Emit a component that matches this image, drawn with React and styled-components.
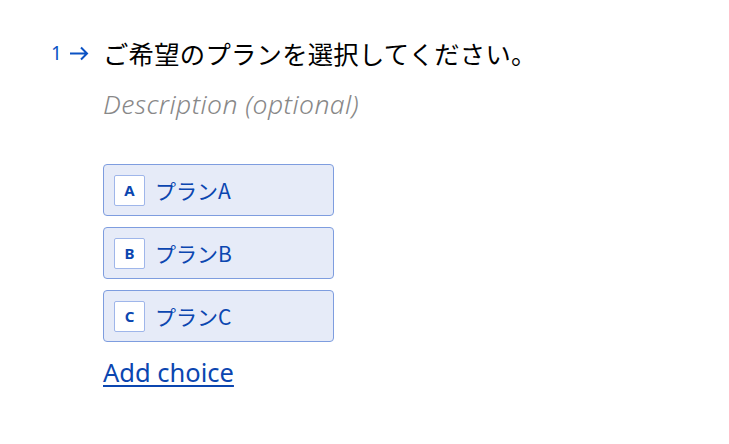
import React from "react";
import styled, { createGlobalStyle } from "styled-components";

const GlobalStyle = createGlobalStyle`
  html, body {
    margin: 0;
    padding: 0;
    background: #ffffff;
  }
  body {
    font-family: "Noto Sans", "Noto Sans CJK JP", sans-serif;
  }
`;

const choices = [
  { key: "A", label: "プランA" },
  { key: "B", label: "プランB" },
  { key: "C", label: "プランC" },
];

const App = () => {
  return (
    <>
      <GlobalStyle />
      <Page>
        <Question>
          <Counter>
            <Num>1</Num>
            <svg width="20" height="15" viewBox="0 0 20 15">
              <path
                d="M1 7.5h17M12 1.5L18 7.5l-6 6"
                fill="none"
                stroke="#0b52c4"
                strokeWidth="2"
              />
            </svg>
          </Counter>
          <Body>
            <Title>ご希望のプランを選択してください。</Title>
            <Description>Description (optional)</Description>
            <ChoiceList>
              {choices.map((c) => (
                <Choice key={c.key}>
                  <KeyBox>{c.key}</KeyBox>
                  <Label>{c.label}</Label>
                </Choice>
              ))}
            </ChoiceList>
            <AddChoice>Add choice</AddChoice>
          </Body>
        </Question>
      </Page>
    </>
  );
};

const Page = styled.div`
  padding: 36px 0 0 49px;
`;

const Question = styled.div`
  display: flex;
  align-items: flex-start;
`;

const Counter = styled.div`
  display: flex;
  align-items: center;
  gap: 7px;
  width: 54px;
  height: 34px;
  color: #0b52c4;
`;

const Num = styled.span`
  font-size: 19px;
  line-height: 1;
  padding-left: 2px;
`;

const Body = styled.div`
  display: flex;
  flex-direction: column;
  align-items: flex-start;
`;

const Title = styled.div`
  font-family: "Noto Sans CJK JP", sans-serif;
  font-size: 25.3px;
  line-height: 34px;
  color: #000;
  letter-spacing: 0.3px;
`;

const Description = styled.div`
  margin-top: 17px;
  font-size: 26.5px;
  line-height: 34px;
  font-style: italic;
  font-weight: 300;
  color: #888;
  letter-spacing: 0.4px;
`;

const ChoiceList = styled.div`
  display: flex;
  flex-direction: column;
  gap: 11px;
  margin-top: 43px;
`;

const Choice = styled.div`
  box-sizing: border-box;
  display: flex;
  align-items: center;
  gap: 10px;
  width: 231px;
  height: 52px;
  padding: 0 10px;
  background: #e6ebf8;
  border: 1.5px solid #7e9ddf;
  border-radius: 4px;
`;

const KeyBox = styled.div`
  box-sizing: border-box;
  display: flex;
  align-items: center;
  justify-content: center;
  width: 31px;
  height: 31px;
  background: #fff;
  border: 1px solid #9fb6ea;
  border-radius: 2px;
  color: #0b46b0;
  font-size: 15px;
  font-weight: 700;
`;

const Label = styled.span`
  font-family: "Noto Sans CJK JP", sans-serif;
  font-size: 21px;
  color: #0b46b0;
`;

const AddChoice = styled.a`
  margin-top: 15px;
  font-size: 25.5px;
  line-height: 30px;
  color: #0b46b0;
  text-decoration: underline;
  text-underline-offset: 3px;
  text-decoration-thickness: 2px;
  cursor: pointer;
`;

export default App;
